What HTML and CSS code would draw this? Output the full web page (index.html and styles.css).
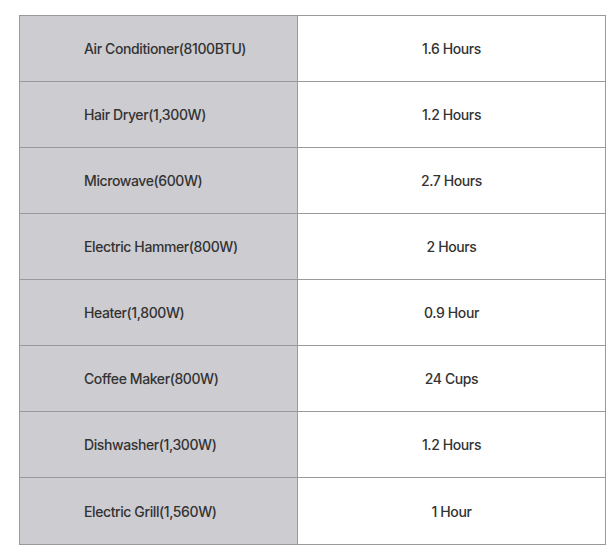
FILE: index.html
```html
<!DOCTYPE html>
<html>
<head>
<meta charset="utf-8">
<link rel="stylesheet" href="styles.css">
</head>
<body>
<table class="spec">
  <tr class="r"><td class="name">Air Conditioner(8100BTU)</td><td class="val">1.6 Hours</td></tr>
  <tr class="r"><td class="name">Hair Dryer(1,300W)</td><td class="val">1.2 Hours</td></tr>
  <tr class="r"><td class="name">Microwave(600W)</td><td class="val">2.7 Hours</td></tr>
  <tr class="r"><td class="name">Electric Hammer(800W)</td><td class="val">2 Hours</td></tr>
  <tr class="r"><td class="name">Heater(1,800W)</td><td class="val">0.9 Hour</td></tr>
  <tr class="r"><td class="name">Coffee Maker(800W)</td><td class="val">24 Cups</td></tr>
  <tr class="r"><td class="name">Dishwasher(1,300W)</td><td class="val">1.2 Hours</td></tr>
  <tr class="r last"><td class="name">Electric Grill(1,560W)</td><td class="val">1 Hour</td></tr>
</table>
</body>
</html>
```
FILE: styles.css
```css
html, body {
  margin: 0;
  padding: 0;
  background: #ffffff;
}
body {
  padding: 15px 0 0 19px;
  font-family: Inter, "Liberation Sans", sans-serif;
  color: #333333;
}
.spec {
  border-collapse: collapse;
  width: 587px;
  table-layout: fixed;
}
.spec td {
  border: 1px solid #999999;
  height: 65px;
  padding: 0;
  font-size: 14px;
  font-weight: 500;
  letter-spacing: -0.4px;
  vertical-align: middle;
}
.spec .last td {
  height: 66px;
}
.spec .name {
  width: 213px;
  background: #cdccd1;
  padding-left: 64px;
  text-align: left;
}
.spec .val {
  text-align: center;
  background: #ffffff;
}
```
